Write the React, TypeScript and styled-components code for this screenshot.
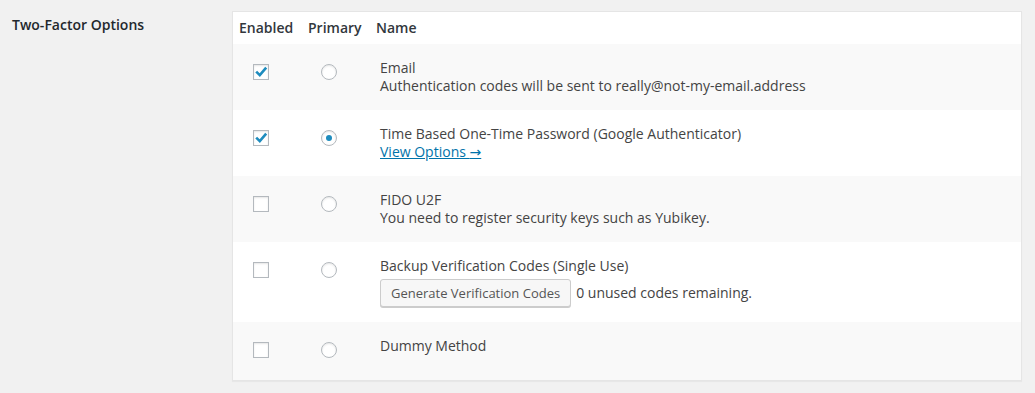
import React from "react";
import styled, { createGlobalStyle } from "styled-components";

const GlobalStyle = createGlobalStyle`
  html, body {
    margin: 0;
    padding: 0;
    background: #f1f1f1;
  }
  body {
    font-family: "Open Sans", "Noto Sans", "DejaVu Sans", sans-serif;
    font-size: 14px;
    color: #444;
    -webkit-font-smoothing: antialiased;
  }
  * { box-sizing: border-box; }
`;

const Page = styled.div`
  display: flex;
  align-items: flex-start;
  padding: 11px 13px 0 12px;
  min-height: 393px;
`;

const Label = styled.div`
  flex: 0 0 220px;
  padding-top: 5px;
  font-size: 14px;
  font-weight: 600;
  line-height: 18px;
  color: #23282d;
`;

const Table = styled.div`
  flex: 1;
  background: #fff;
  border: 1px solid #e5e5e5;
  box-shadow: 0 1px 1px rgba(0, 0, 0, 0.04);
`;

const HeadRow = styled.div`
  display: grid;
  grid-template-columns: 68px 69px 1fr;
  background: #fff;
`;

const HeadCell = styled.div<{ $pl: number }>`
  padding: 7px 0 7px ${(p) => p.$pl}px;
  font-size: 14px;
  font-weight: 600;
  line-height: 18px;
  color: #32373c;
`;

const Row = styled.div<{ $alt?: boolean }>`
  display: grid;
  grid-template-columns: 68px 69px 1fr;
  background: ${(p) => (p.$alt ? "#f9f9f9" : "#fff")};
`;

const ControlCell = styled.div`
  padding: 20px 0 22px 20px;
`;

const NameCell = styled.div`
  padding: 15px 10px 15px 10px;
  font-size: 14px;
  line-height: 18px;
  color: #444;
`;

const Line = styled.div``;

const BoxBase = styled.span`
  display: block;
  width: 16px;
  height: 16px;
  border: 1px solid #b4b9be;
  background: #fff;
  box-shadow: inset 0 1px 2px rgba(0, 0, 0, 0.1);
  position: relative;
`;

const CheckBox = styled(BoxBase)``;

const Radio = styled(BoxBase)<{ $on?: boolean }>`
  border-radius: 50%;
  &::before {
    content: "";
    display: ${(p) => (p.$on ? "block" : "none")};
    position: absolute;
    left: 4px;
    top: 4px;
    width: 6px;
    height: 6px;
    border-radius: 50%;
    background: #1e8cbe;
  }
`;

const CheckMark = styled.svg`
  position: absolute;
  left: -1px;
  top: -1px;
`;

const Link = styled.a`
  color: #0073aa;
  text-decoration: underline;
  cursor: pointer;
`;

const Arrow = styled.span`
  font-family: "Noto Sans", "DejaVu Sans", sans-serif;
  font-size: 14px;
`;

const ButtonLine = styled.div`
  display: flex;
  align-items: center;
  gap: 5px;
  margin-top: 4px;
  height: 28px;
`;

const Button = styled.button`
  height: 28px;
  padding: 0 10px 1px;
  line-height: 26px;
  font-family: "Open Sans", "Noto Sans", sans-serif;
  font-size: 13px;
  color: #555;
  background: #f7f7f7;
  border: 1px solid #ccc;
  border-radius: 3px;
  box-shadow: 0 1px 0 #ccc;
  white-space: nowrap;
  cursor: pointer;
`;

const Check = ({ on }: { on?: boolean }) => (
  <CheckBox>
    {on && (
      <CheckMark width="16" height="16" viewBox="0 0 16 16">
        <path
          d="M3.2 7.6 L6.8 11.2 L13.2 3.6"
          fill="none"
          stroke="#1e8cbe"
          strokeWidth="2.6"
          strokeLinejoin="miter"
          strokeLinecap="butt"
        />
      </CheckMark>
    )}
  </CheckBox>
);

type Method = {
  enabled?: boolean;
  primary?: boolean;
  content: React.ReactNode;
};

const methods: Method[] = [
  {
    enabled: true,
    content: (
      <>
        <Line>Email</Line>
        <Line>Authentication codes will be sent to really@not-my-email.address</Line>
      </>
    ),
  },
  {
    enabled: true,
    primary: true,
    content: (
      <>
        <Line>Time Based One-Time Password (Google Authenticator)</Line>
        <Line>
          <Link>
            View Options <Arrow>→</Arrow>
          </Link>
        </Line>
      </>
    ),
  },
  {
    content: (
      <>
        <Line>FIDO U2F</Line>
        <Line>You need to register security keys such as Yubikey.</Line>
      </>
    ),
  },
  {
    content: (
      <>
        <Line>Backup Verification Codes (Single Use)</Line>
        <ButtonLine>
          <Button type="button">Generate Verification Codes</Button>
          <span>0 unused codes remaining.</span>
        </ButtonLine>
      </>
    ),
  },
  {
    content: <Line>Dummy Method</Line>,
  },
];

export default function App() {
  return (
    <>
      <GlobalStyle />
      <Page>
        <Label>Two-Factor Options</Label>
        <Table>
          <HeadRow>
            <HeadCell $pl={6}>Enabled</HeadCell>
            <HeadCell $pl={7}>Primary</HeadCell>
            <HeadCell $pl={6}>Name</HeadCell>
          </HeadRow>
          {methods.map((m, i) => (
            <Row key={i} $alt={i % 2 === 0}>
              <ControlCell>
                <Check on={m.enabled} />
              </ControlCell>
              <ControlCell>
                <Radio $on={m.primary} />
              </ControlCell>
              <NameCell>{m.content}</NameCell>
            </Row>
          ))}
        </Table>
      </Page>
    </>
  );
}
